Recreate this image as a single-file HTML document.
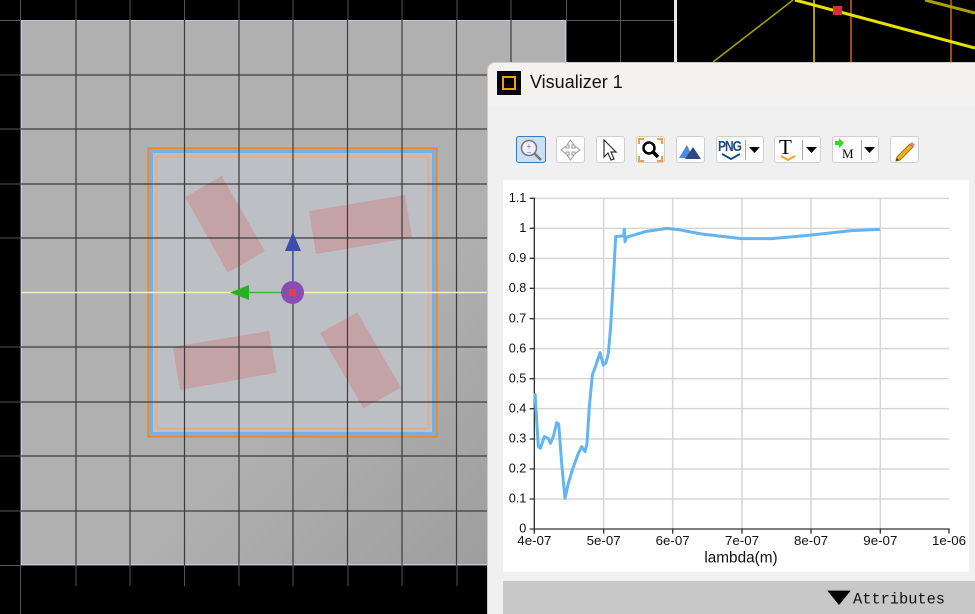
<!DOCTYPE html>
<html><head><meta charset="utf-8"><style>
html,body{margin:0;padding:0;width:975px;height:614px;overflow:hidden;background:#000;font-family:"Liberation Sans",sans-serif;position:relative}
.abs{position:absolute}
.btn{position:absolute;top:136px;height:27px;background:#fdfdfd;border:1px solid #cfcfcf;border-radius:3px;box-sizing:border-box}
</style></head><body>
<svg class="abs" style="left:0;top:0" width="975" height="614">
<rect x="0" y="0" width="975" height="614" fill="#000"/>
<g stroke="#555" stroke-width="1">
<line x1="0" y1="20.5" x2="676" y2="20.5"/>
<line x1="0" y1="565.5" x2="676" y2="565.5"/>
<line x1="566.5" y1="0" x2="566.5" y2="614"/>
<line x1="620.5" y1="0" x2="620.5" y2="70"/>
<line x1="20.5" y1="0" x2="20.5" y2="614"/>
<g id="vt"><line x1="76" y1="0" x2="76" y2="20"/><line x1="130" y1="0" x2="130" y2="20"/><line x1="184.5" y1="0" x2="184.5" y2="20"/><line x1="239" y1="0" x2="239" y2="20"/><line x1="293" y1="0" x2="293" y2="20"/><line x1="348" y1="0" x2="348" y2="20"/><line x1="402" y1="0" x2="402" y2="20"/><line x1="457" y1="0" x2="457" y2="20"/><line x1="511" y1="0" x2="511" y2="20"/></g>
<use href="#vt" y="566"/>
<line x1="0" y1="75" x2="20" y2="75"/><line x1="0" y1="129" x2="20" y2="129"/><line x1="0" y1="184" x2="20" y2="184"/><line x1="0" y1="238" x2="20" y2="238"/><line x1="0" y1="347" x2="20" y2="347"/><line x1="0" y1="402" x2="20" y2="402"/><line x1="0" y1="456" x2="20" y2="456"/><line x1="0" y1="511" x2="20" y2="511"/>
</g>
<defs><linearGradient id="gg" x1="0" y1="0" x2="1" y2="1"><stop offset="0.6" stop-color="#b0b0b0"/><stop offset="1" stop-color="#9a9a9a"/></linearGradient></defs>
<rect x="21" y="20" width="545" height="545" fill="url(#gg)"/>
<rect x="21.5" y="20.5" width="544" height="544" fill="none" stroke="#c8c8e0" stroke-width="1"/>
<rect x="148.5" y="148.5" width="288" height="288" fill="#bcc0c5"/>
<rect x="148.5" y="148.5" width="288" height="288" fill="none" stroke="#ef8a22" stroke-width="2.5"/>
<rect x="151.5" y="151.5" width="282" height="282" fill="none" stroke="#7aaee0" stroke-width="3"/>
<rect x="156.5" y="156.5" width="272" height="272" fill="none" stroke="#dfae85" stroke-width="2"/>
<g fill="#c4a3a6">
<polygon points="185,197 221.7,176 265,251 227.7,272.7"/>
<polygon points="309,211 405,195 412.3,237.7 316,254"/>
<polygon points="172.7,346.7 269,331 276.7,372.7 180,390"/>
<polygon points="320,333.3 357.3,312.3 401,387.7 363.3,408.3"/>
</g>
<g stroke="#3c3c3c" stroke-width="1.2">
<line x1="76" y1="20" x2="76" y2="565"/><line x1="130" y1="20" x2="130" y2="565"/><line x1="184.5" y1="20" x2="184.5" y2="565"/><line x1="239" y1="20" x2="239" y2="565"/><line x1="293" y1="20" x2="293" y2="565"/><line x1="347.5" y1="20" x2="347.5" y2="565"/><line x1="402" y1="20" x2="402" y2="565"/><line x1="456.5" y1="20" x2="456.5" y2="565"/><line x1="511" y1="20" x2="511" y2="565"/>
<line x1="21" y1="75" x2="566" y2="75"/><line x1="21" y1="129" x2="566" y2="129"/><line x1="21" y1="184" x2="566" y2="184"/><line x1="21" y1="238" x2="566" y2="238"/><line x1="21" y1="347" x2="566" y2="347"/><line x1="21" y1="402" x2="566" y2="402"/><line x1="21" y1="456" x2="566" y2="456"/><line x1="21" y1="511" x2="566" y2="511"/>
</g>
<line x1="21" y1="292.5" x2="566" y2="292.5" stroke="#f0f0c0" stroke-width="1.5"/>
<line x1="292.8" y1="248" x2="292.8" y2="292" stroke="#4a58b0" stroke-width="1.5"/>
<polygon points="292.8,232 285,251 301,251" fill="#3c4ea8"/>
<line x1="245" y1="292.5" x2="292" y2="292.5" stroke="#3cb03c" stroke-width="1.5"/>
<polygon points="230,292.5 249,285 249,300" fill="#28b028"/>
<circle cx="292.5" cy="292.5" r="11.5" fill="#8a4cb0"/>
<rect x="289" y="289" width="7" height="7" fill="#e04050"/>
<rect x="674" y="0" width="3" height="70" fill="#e8e8e8"/>
<line x1="713" y1="62" x2="793" y2="0" stroke="#a8a000" stroke-width="1.5"/>
<line x1="814" y1="0" x2="814" y2="70" stroke="#a8a000" stroke-width="2"/>
<line x1="851" y1="0" x2="851" y2="70" stroke="#a04c00" stroke-width="2"/>
<line x1="951" y1="0" x2="951" y2="70" stroke="#a04c00" stroke-width="2"/>
<line x1="795" y1="0" x2="975" y2="48" stroke="#e8e000" stroke-width="3"/>
<line x1="925" y1="0" x2="975" y2="13" stroke="#a8a000" stroke-width="3"/>
<rect x="833" y="6" width="9" height="9" fill="#d83030"/>
</svg>
<div class="abs" style="left:487px;top:62px;width:488px;height:552px;background:#f0f0f0;border-radius:8px 0 0 0;border-left:1px solid #ccc;border-top:1px solid #ccc;box-sizing:border-box"></div>
<div class="abs" style="left:488px;top:63px;width:487px;height:43px;background:#f3f2f0;border-radius:8px 0 0 0"></div>
<div class="abs" style="left:497px;top:71px;width:24px;height:24px;background:#000"></div>
<div class="abs" style="left:502px;top:76px;width:10px;height:10px;border:2px solid #f0a000"></div>
<div class="abs" style="left:530px;top:72px;font-size:18px;color:#111">Visualizer 1</div>
<div class="btn" style="left:516px;width:30px;background:#cce0f5;border-color:#3a78c0"></div>
<svg class="abs" style="left:518px;top:137px" width="26" height="26"><circle cx="11" cy="11" r="7.5" fill="#eef" stroke="#777" stroke-width="1.5"/><line x1="16.5" y1="16.5" x2="23" y2="23" stroke="#777" stroke-width="2.5"/><text x="11" y="12" font-size="8" text-anchor="middle" fill="#777">+</text><text x="11" y="18" font-size="8" text-anchor="middle" fill="#777">−</text></svg>
<div class="btn" style="left:556px;width:29px"></div>
<svg class="abs" style="left:557px;top:137px" width="27" height="26"><path d="M13.5 3 L17 8 H15 V11 H18 V9 L23 13 L18 17 V15 H15 V18 H17 L13.5 23 L10 18 H12 V15 H9 V17 L4 13 L9 9 V11 H12 V8 H10 Z" fill="#fff" stroke="#999"/></svg>
<div class="btn" style="left:596px;width:29px"></div>
<svg class="abs" style="left:597px;top:137px" width="27" height="26"><path d="M7 3 V20 L11 16 L14 23 L17 22 L14 15 H19 Z" fill="#fff" stroke="#333" stroke-width="1.2"/></svg>
<div class="btn" style="left:636px;width:29px"></div>
<svg class="abs" style="left:637px;top:137px" width="27" height="26"><path d="M2 7 V2 H7 M20 2 H25 V7 M2 19 V24 H7 M20 24 H25 V19" fill="none" stroke="#f0a040" stroke-width="2"/><circle cx="12" cy="11" r="5.5" fill="#fff" stroke="#000" stroke-width="2.5"/><line x1="16" y1="15" x2="21" y2="20" stroke="#000" stroke-width="3.5"/></svg>
<div class="btn" style="left:676px;width:29px"></div>
<svg class="abs" style="left:677px;top:137px" width="27" height="26"><polygon points="2,21 10,8 16,21" fill="#4a8ae0"/><polygon points="8,22 16,10 24,22" fill="#2c4a80"/></svg>
<div class="btn" style="left:716px;width:48px"></div>
<div class="abs" style="left:745px;top:140px;width:1px;height:20px;background:#aaa"></div>
<div class="abs" style="left:718px;top:139px;font-size:12px;font-weight:bold;color:#1c4a80;letter-spacing:-1px;transform:scaleY(1.2)">PNG</div>
<svg class="abs" style="left:719px;top:152px" width="24" height="10"><path d="M3 2 L12 7 L21 2" fill="none" stroke="#1c4a80" stroke-width="2"/></svg>
<svg class="abs" style="left:747px;top:145px" width="15" height="10"><polygon points="2,2 13,2 7.5,8" fill="#000"/></svg>
<div class="btn" style="left:774px;width:47px"></div>
<div class="abs" style="left:802px;top:140px;width:1px;height:20px;background:#aaa"></div>
<div class="abs" style="left:779px;top:135px;font-size:21px;font-family:'Liberation Serif',serif;color:#000">T</div>
<svg class="abs" style="left:779px;top:154px" width="20" height="8"><path d="M2 2 L9 6 L16 2" fill="none" stroke="#f0a030" stroke-width="2"/></svg>
<svg class="abs" style="left:804px;top:145px" width="15" height="10"><polygon points="2,2 13,2 7.5,8" fill="#000"/></svg>
<div class="btn" style="left:832px;width:47px"></div>
<div class="abs" style="left:861px;top:140px;width:1px;height:20px;background:#aaa"></div>
<svg class="abs" style="left:834px;top:138px" width="12" height="12"><polygon points="1,3 5,3 5,0 10,5 5,10 5,7 1,7" fill="#20e020"/></svg>
<div class="abs" style="left:842px;top:146px;font-size:13px;font-family:'Liberation Serif',serif">M</div>
<svg class="abs" style="left:862px;top:145px" width="15" height="10"><polygon points="2,2 13,2 7.5,8" fill="#000"/></svg>
<div class="btn" style="left:890px;width:29px"></div>
<svg class="abs" style="left:891px;top:137px" width="27" height="26"><path d="M6 20 L19 7 L22 10 L9 23 L5 24 Z" fill="#f0b020" stroke="#a07010"/><path d="M19 7 L21 5 L24 8 L22 10 Z" fill="#e08090"/><path d="M5 24 L6 21 L8 23 Z" fill="#333"/></svg>
<svg class="abs" style="left:485px;top:180px" width="490" height="434" viewBox="0 0 1470 1302">
<rect x="54" y="0" width="1398" height="1175" fill="#fff"/>
<g stroke="#d6d6d6" stroke-width="4.5">
<line x1="148" y1="55" x2="1392" y2="55"/><line x1="148" y1="145" x2="1392" y2="145"/><line x1="148" y1="235" x2="1392" y2="235"/><line x1="148" y1="325" x2="1392" y2="325"/><line x1="148" y1="416" x2="1392" y2="416"/><line x1="148" y1="506" x2="1392" y2="506"/><line x1="148" y1="596" x2="1392" y2="596"/><line x1="148" y1="686" x2="1392" y2="686"/><line x1="148" y1="777" x2="1392" y2="777"/><line x1="148" y1="867" x2="1392" y2="867"/><line x1="148" y1="957" x2="1392" y2="957"/>
<line x1="356" y1="55" x2="356" y2="1047"/><line x1="563" y1="55" x2="563" y2="1047"/><line x1="771" y1="55" x2="771" y2="1047"/><line x1="978" y1="55" x2="978" y2="1047"/><line x1="1186" y1="55" x2="1186" y2="1047"/>
</g>
<g stroke="#333" stroke-width="4">
<line x1="148" y1="53" x2="148" y2="1049"/><line x1="146" y1="1047" x2="1394" y2="1047"/>
<path d="M134 55H148M134 145H148M134 235H148M134 325H148M134 416H148M134 506H148M134 596H148M134 686H148M134 777H148M134 867H148M134 957H148M134 1047H148"/>
<path d="M148 1047V1061M356 1047V1061M563 1047V1061M771 1047V1061M978 1047V1061M1186 1047V1061M1392 1047V1061"/>
</g>
<g font-size="38" fill="#111" text-anchor="end" font-family="Liberation Sans,sans-serif">
<text x="124" y="66">1.1</text><text x="124" y="156">1</text><text x="124" y="246">0.9</text><text x="124" y="336">0.8</text><text x="124" y="427">0.7</text><text x="124" y="517">0.6</text><text x="124" y="607">0.5</text><text x="124" y="697">0.4</text><text x="124" y="788">0.3</text><text x="124" y="878">0.2</text><text x="124" y="968">0.1</text><text x="124" y="1058">0</text>
</g>
<g font-size="40" fill="#111" text-anchor="middle" font-family="Liberation Sans,sans-serif">
<text x="148" y="1095">4e-07</text><text x="356" y="1095">5e-07</text><text x="563" y="1095">6e-07</text><text x="771" y="1095">7e-07</text><text x="978" y="1095">8e-07</text><text x="1186" y="1095">9e-07</text><text x="1392" y="1095">1e-06</text>
<text x="768" y="1147" font-size="46">lambda(m)</text>
</g>
<path d="M150 640 L160 800 L166 805 L178 770 L190 775 L196 790 L205 770 L215 728 L221 732 L230 850 L240 955 L250 910 L262 870 L278 825 L290 800 L300 815 L306 790 L313 680 L322 585 L333 555 L345 518 L355 555 L363 548 L370 520 L377 440 L385 300 L392 170 L410 168 L416 168 L418 148 L420 185 L424 172 L480 155 L545 145 L575 148 L650 162 L770 176 L860 176 L980 165 L1100 152 L1185 148" fill="none" stroke="#64b4f0" stroke-width="9" stroke-linejoin="round"/>
<rect x="54" y="1203" width="1420" height="100" fill="#c8c8c8"/>
<polygon points="1027,1232 1097,1232 1062,1275" fill="#000"/>
<text x="1104" y="1270" font-size="46" font-family="Liberation Mono,monospace" fill="#111">Attributes</text>
</svg>
</body></html>
